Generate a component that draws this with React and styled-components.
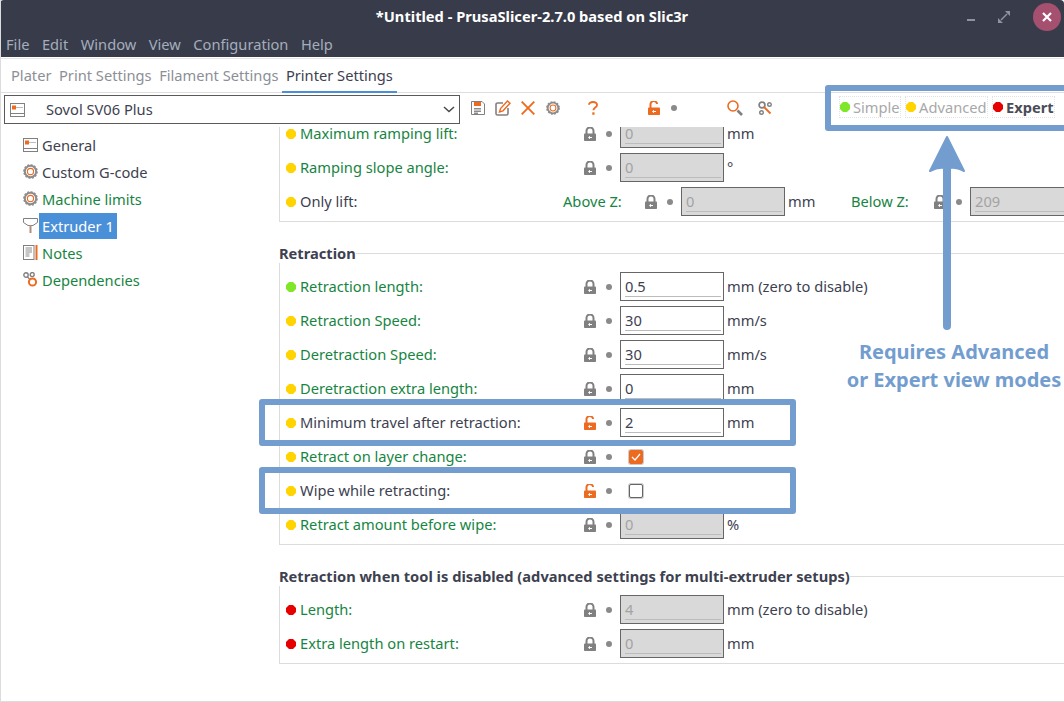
import styled, { createGlobalStyle } from "styled-components";

const GlobalStyle = createGlobalStyle`
    html, body {
        margin: 0;
        padding: 0;
        background: #fff;
    }
    * {
        box-sizing: border-box;
    }
`;

const ORANGE = "#ed6b21";
const GREY = "#808080";
const BLUE = "#739dcf";
const GREEN_TEXT = "#17853f";
const DARK_TEXT = "#3d4150";

const LEVELS = { simple: "#7fe628", advanced: "#ffd400", expert: "#e60000" };

const LockIcon = ({ open }) => (
    <svg width="12" height="14" viewBox="0 0 12 14">
        <path
            d={open ? "M2.5 7V3.8a3 3 0 0 1 6.6-.8" : "M2.5 7V4a3.5 3.5 0 0 1 7 0v3"}
            fill="none"
            stroke={open ? ORANGE : GREY}
            strokeWidth="2"
        />
        <rect x="0" y="6.5" width="12" height="7.5" rx="0.8" fill={open ? ORANGE : GREY} />
        <path d="M8 10.5H4.6M6 9.2l-1.4 1.3L6 11.8" fill="none" stroke="#fff" strokeWidth="1" />
    </svg>
);

const WindowIcon = () => (
    <svg width="15" height="14" viewBox="0 0 15 14">
        <rect x="0.5" y="0.5" width="14" height="13" fill="#fff" stroke={GREY} />
        <path d="M1 10.5h13" stroke={GREY} />
        <rect x="2" y="2.5" width="4" height="4" fill={ORANGE} />
        <path d="M6 4.500h7" stroke="#bdbdbd" />
    </svg>
);

const GearIcon = ({ size = 15 }) => (
    <svg width={size} height={size} viewBox="0 0 15 15">
        <circle cx="7.5" cy="7.5" r="5.7" fill="none" stroke="#8c8c8c" strokeWidth="2" />
        <circle cx="7.5" cy="7.5" r="6.7" fill="none" stroke="#8c8c8c" strokeWidth="1.3" strokeDasharray="2 1.5" />
        <circle cx="7.5" cy="7.5" r="3.1" fill="#fff" stroke={ORANGE} strokeWidth="1.1" />
    </svg>
);

const FunnelIcon = () => (
    <svg width="15" height="15" viewBox="0 0 15 15">
        <path d="M.5.5h14v4L10 7.500H5L.5 4.500z" fill="#fff" stroke={GREY} />
        <rect x="6.500" y="7" width="2" height="8" fill="#b08f80" />
    </svg>
);

const NotesIcon = () => (
    <svg width="15" height="15" viewBox="0 0 15 15">
        <rect x="0.5" y="0.5" width="10.500" height="14" fill="#fff" stroke={GREY} />
        <path d="M2.500 3h6.500M2.500 5h6.500M2.500 7h6.500M2.500 9h4M2.500 11h4" stroke="#8c8c8c" />
        <rect x="12.500" y="0" width="2" height="15" fill={ORANGE} />
    </svg>
);

const DepsIcon = () => (
    <svg width="15" height="15" viewBox="0 0 15 15">
        <circle cx="3" cy="3" r="2.200" fill="none" stroke={GREY} strokeWidth="1.400" />
        <circle cx="9.200" cy="2.600" r="2" fill="none" stroke={GREY} strokeWidth="1.400" />
        <path d="M4.500 5l2 2" stroke={GREY} strokeWidth="1.200" />
        <circle cx="9.500" cy="10" r="3.600" fill="none" stroke={ORANGE} strokeWidth="2" />
    </svg>
);

const SaveIcon = () => (
    <svg width="14" height="14" viewBox="0 0 14 14">
        <path d="M.5.5h10.500l2.500 2.500v10.500H.5z" fill="#fff" stroke={GREY} />
        <path d="M3 1h7v4H3z" fill={ORANGE} />
        <path d="M3 7h7v1.500H3zM3 9.500h7V11H3zM3 11.500h4V13H3z" fill="#8c8c8c" />
    </svg>
);

const EditIcon = () => (
    <svg width="16" height="16" viewBox="0 0 16 16">
        <path d="M13 8v5.500A1.500 1.500 0 0 1 11.500 15h-9A1.500 1.500 0 0 1 1 13.500v-9A1.500 1.500 0 0 1 2.500 3H8" fill="none" stroke={GREY} strokeWidth="1.600" />
        <path d="M4.500 12l1-3.500 7-7.500 2.500 2.300-7 7.500z" fill="#fff" stroke={ORANGE} strokeWidth="1.400" />
    </svg>
);

const CrossIcon = () => (
    <svg width="14" height="14" viewBox="0 0 14 14">
        <path d="M.7.7l12.600 12.600M13.300.7L.7 13.300" stroke={ORANGE} strokeWidth="1.900" />
    </svg>
);

const QuestionIcon = () => (
    <svg width="10" height="14" viewBox="0 0 10 14">
        <path d="M1 3.800C1 2 2.600 1 5 1s4 1.100 4 2.900c0 2.700-3.600 2.500-3.600 5.400" fill="none" stroke={ORANGE} strokeWidth="1.900" />
        <rect x="4.300" y="11.300" width="2.200" height="2.500" fill={ORANGE} />
    </svg>
);

const SearchIcon = () => (
    <svg width="16" height="16" viewBox="0 0 16 16">
        <path d="M10.500 10.500l4.500 4.500" stroke={GREY} strokeWidth="2.600" />
        <circle cx="6" cy="6" r="5" fill="#fff" stroke={ORANGE} strokeWidth="1.600" />
    </svg>
);

const ToolsIcon = () => (
    <svg width="14" height="14" viewBox="0 0 14 14">
        <circle cx="4" cy="4" r="2.900" fill="none" stroke={GREY} strokeWidth="1.700" />
        <circle cx="11.500" cy="3.500" r="1.800" fill="none" stroke={GREY} strokeWidth="1.400" />
        <circle cx="3.500" cy="11.500" r="1.800" fill="none" stroke={GREY} strokeWidth="1.400" />
        <path d="M6 6l6.500 6.500" stroke={ORANGE} strokeWidth="1.800" />
    </svg>
);

const Chevron = () => (
    <svg width="12" height="7" viewBox="0 0 12 7">
        <path d="M1 1l5 4.500L11 1" fill="none" stroke="#4a4a4a" strokeWidth="1.500" />
    </svg>
);

const Bullet = ({ level }) => (
    <SBullet width="10" height="10" viewBox="0 0 10 10">
        <path d="M3 0h4l3 3v4l-3 3H3L0 7V3z" fill={LEVELS[level]} />
    </SBullet>
);

const Field = ({ value, disabled }) => (
    <SField $disabled={disabled}>
        <SFieldValue>{value}</SFieldValue>
    </SField>
);

const Controls = ({ open, children }) => (
    <>
        <SLock>
            <LockIcon open={open} />
        </SLock>
        <SDot />
        {children}
    </>
);

const SettingRow = ({ level, label, green, open, value, disabled, unit, check }) => (
    <SRow>
        <Bullet level={level} />
        <SLabel $green={green}>{label}</SLabel>
        <Controls open={open}>
            {check === undefined ? (
                <Field value={value} disabled={disabled} />
            ) : (
                <SCheckSlot>
                    <SCheck $checked={check}>
                        {check && (
                            <svg width="10" height="8" viewBox="0 0 10 8">
                                <path d="M1 4l3 3 5-6" fill="none" stroke="#fff" strokeWidth="1.200" />
                            </svg>
                        )}
                    </SCheck>
                </SCheckSlot>
            )}
        </Controls>
        {unit && <SUnit>{unit}</SUnit>}
    </SRow>
);

const retraction = [
    { level: "simple", label: "Retraction length:", green: true, value: "0.5", unit: "mm (zero to disable)" },
    { level: "advanced", label: "Retraction Speed:", green: true, value: "30", unit: "mm/s" },
    { level: "advanced", label: "Deretraction Speed:", green: true, value: "30", unit: "mm/s" },
    { level: "advanced", label: "Deretraction extra length:", green: true, value: "0", unit: "mm" },
    { level: "advanced", label: "Minimum travel after retraction:", open: true, value: "2", unit: "mm" },
    { level: "advanced", label: "Retract on layer change:", green: true, check: true },
    { level: "advanced", label: "Wipe while retracting:", open: true, check: false },
    { level: "advanced", label: "Retract amount before wipe:", green: true, value: "0", disabled: true, unit: "%" },
];

const sideItems = [
    { icon: <WindowIcon />, label: "General" },
    { icon: <GearIcon />, label: "Custom G-code" },
    { icon: <GearIcon />, label: "Machine limits", green: true },
    { icon: <FunnelIcon />, label: "Extruder 1", active: true },
    { icon: <NotesIcon />, label: "Notes", green: true },
    { icon: <DepsIcon />, label: "Dependencies", green: true },
];

export default function App() {
    return (
        <SWindow>
            <GlobalStyle />
            <SHeader>
                <STitleBar>
                    <span />
                    <STitle>*Untitled - PrusaSlicer-2.7.0 based on Slic3r</STitle>
                    <SWindowButtons>
                        <SMinimize />
                        <svg width="12" height="12" viewBox="0 0 12 12">
                            <path d="M7 0h5v5zM0 12V7l5 5z" fill="#8d93a3" />
                            <path d="M3 9l6-6" stroke="#8d93a3" strokeWidth="1.500" />
                        </svg>
                        <SClose>
                            <svg width="10" height="10" viewBox="0 0 10 10">
                                <path d="M1 1l8 8M9 1L1 9" stroke="#fff" strokeWidth="2.200" />
                            </svg>
                        </SClose>
                    </SWindowButtons>
                </STitleBar>
                <SMenuBar>
                    {["File", "Edit", "Window", "View", "Configuration", "Help"].map((m) => (
                        <SMenuItem key={m}>{m}</SMenuItem>
                    ))}
                </SMenuBar>
            </SHeader>

            <STabBar>
                <STab>Plater</STab>
                <STab>Print Settings</STab>
                <STab>Filament Settings</STab>
                <STab $active>Printer Settings</STab>
            </STabBar>

            <SToolbar>
                <SCombo>
                    <WindowIcon />
                    <SComboText>Sovol SV06 Plus</SComboText>
                    <Chevron />
                </SCombo>
                <SToolIcons>
                    <SaveIcon />
                    <EditIcon />
                    <CrossIcon />
                    <SToolGear>
                        <GearIcon size={14} />
                    </SToolGear>
                    <SQuestion>
                        <QuestionIcon />
                    </SQuestion>
                    <SToolLock>
                        <LockIcon open />
                        <SToolDot />
                    </SToolLock>
                    <SSearch>
                        <SearchIcon />
                    </SSearch>
                    <SToolsWrap>
                        <ToolsIcon />
                    </SToolsWrap>
                </SToolIcons>
                <SModes>
                    <SMode>
                        <Bullet level="simple" />
                        <SModeText>Simple</SModeText>
                    </SMode>
                    <SMode>
                        <Bullet level="advanced" />
                        <SModeText>Advanced</SModeText>
                    </SMode>
                    <SMode>
                        <Bullet level="expert" />
                        <SModeText $active>Expert</SModeText>
                    </SMode>
                </SModes>
            </SToolbar>

            <SBody>
                <SSidebar>
                    {sideItems.map((item) => (
                        <SSideItem key={item.label}>
                            <SSideIcon>{item.icon}</SSideIcon>
                            <SSideLabel $green={item.green} $active={item.active}>
                                {item.label}
                            </SSideLabel>
                        </SSideItem>
                    ))}
                </SSidebar>

                <SSettings>
                    <SFirstGroup>
                        <SettingRow level="advanced" label="Maximum ramping lift:" green value="0" disabled unit="mm" />
                        <SettingRow level="advanced" label="Ramping slope angle:" green value="0" disabled unit="°" />
                        <SRow>
                            <Bullet level="advanced" />
                            <SLiftLabel>Only lift:</SLiftLabel>
                            <SSubLabel $width={82}>Above Z:</SSubLabel>
                            <Controls>
                                <Field value="0" disabled />
                            </Controls>
                            <SLiftUnit>mm</SLiftUnit>
                            <SSubLabel $width={83}>Below Z:</SSubLabel>
                            <Controls>
                                <Field value="209" disabled />
                            </Controls>
                        </SRow>
                    </SFirstGroup>

                    <SGroup>
                        <SLegend>Retraction</SLegend>
                        {retraction.map((row) => (
                            <SettingRow key={row.label} {...row} />
                        ))}
                    </SGroup>

                    <SGroup>
                        <SLegend>Retraction when tool is disabled (advanced settings for multi-extruder setups)</SLegend>
                        <SettingRow level="expert" label="Length:" green value="4" disabled unit="mm (zero to disable)" />
                        <SettingRow level="expert" label="Extra length on restart:" green value="0" disabled unit="mm" />
                    </SGroup>
                </SSettings>
            </SBody>

            <SHighlight $top={399} $left={259} $width={537} $height={47} />
            <SHighlight $top={467} $left={259} $width={537} $height={47} />
            <SHighlight $top={85} $left={825} $width={245} $height={46} />
            <SArrow width="40" height="198" viewBox="0 0 40 198">
                <path d="M20 3L37 37Q29 33 23 34L23 192a3 3 0 0 1-6 0L17 34Q11 33 3 37z" fill={BLUE} stroke={BLUE} strokeWidth="2" strokeLinejoin="round" />
            </SArrow>
            <SCallout>
                Requires Advanced
                <br />
                or Expert view modes
            </SCallout>
        </SWindow>
    );
}

const SWindow = styled.div`
    position: relative;
    width: 1064px;
    height: 702px;
    overflow: hidden;
    display: flex;
    flex-direction: column;
    background: #fff;
    border-left: 1px solid #dcdcdc;
    border-bottom: 1px solid #dcdcdc;
    font-family: "Noto Sans", sans-serif;
    font-size: 14.67px;
    color: ${DARK_TEXT};
`;

const SHeader = styled.header`
    margin-left: -1px;
    height: 57px;
    flex: none;
    display: flex;
    flex-direction: column;
    background: #383c4a;
    border-radius: 4px 4px 0 0;
`;

const STitleBar = styled.div`
    height: 31px;
    display: grid;
    grid-template-columns: 1fr auto 1fr;
    align-items: center;
`;

const STitle = styled.div`
    color: #fff;
    font-weight: 700;
`;

const SWindowButtons = styled.div`
    display: flex;
    align-items: center;
    justify-content: flex-end;
    padding-right: 3px;
    margin-top: 3px;
    gap: 23px;
`;

const SMinimize = styled.span`
    width: 8px;
    height: 2px;
    margin-top: 6px;
    background: #8d93a3;
`;

const SClose = styled.span`
    width: 28px;
    height: 28px;
    border-radius: 50%;
    background: #a5506f;
    display: flex;
    align-items: center;
    justify-content: center;
`;

const SMenuBar = styled.nav`
    display: flex;
    height: 25px;
    margin-left: -0.25px;
    align-items: center;
`;

const SMenuItem = styled.span`
    padding: 0 6.25px;
    color: #a4aebd;
`;

const STabBar = styled.div`
    flex: none;
    height: 35px;
    margin-top: 1px;
    padding-left: 6.25px;
    display: flex;
    border-top: 1px solid #e6e6e6;
    border-bottom: 1px solid #dedede;
`;

const STab = styled.div`
    padding: 0 3.75px;
    margin-bottom: -1px;
    display: flex;
    align-items: center;
    color: ${(props) => (props.$active ? DARK_TEXT : "#8c8f96")};
    border-bottom: 2px solid ${(props) => (props.$active ? "#4a90d9" : "transparent")};
`;

const SToolbar = styled.div`
    flex: none;
    height: 34px;
    padding: 2px 0 0 3px;
    display: flex;
    align-items: flex-start;
`;

const SCombo = styled.div`
    width: 456px;
    height: 29px;
    padding: 0 4px 0 5px;
    display: flex;
    align-items: center;
    border: 1px solid #5a5a5a;
`;

const SComboText = styled.span`
    flex: 1;
    margin-left: 21px;
    padding-bottom: 2px;
`;

const SToolIcons = styled.div`
    width: 313px;
    height: 26px;
    padding-left: 11px;
    display: flex;
    align-items: center;
    gap: 10px;
`;

const SToolGear = styled.span`
    display: flex;
    margin-left: 1px;
`;

const SQuestion = styled.span`
    display: flex;
    margin-left: 18px;
`;

const SToolLock = styled.span`
    display: flex;
    align-items: center;
    margin-left: 40px;
`;

const SSearch = styled.span`
    display: flex;
    margin-left: 40px;
`;

const SToolsWrap = styled.span`
    display: flex;
    margin-left: 5px;
`;

const SModes = styled.div`
    display: flex;
    height: 20px;
    margin-top: 2px;
    margin-left: 67px;
    gap: 6.5px;
`;

const SMode = styled.div`
    display: flex;
    align-items: center;
    gap: 3px;
    outline: 1px dotted #e2e2e2;

    svg {
        margin-top: 0;
    }
`;

const SModeText = styled.span`
    color: ${(props) => (props.$active ? "#4a4d58" : "#a8a8a8")};
    font-weight: ${(props) => (props.$active ? 700 : 400)};
`;

const SBody = styled.div`
    flex: 1;
    min-height: 0;
    display: flex;
    overflow: hidden;
`;

const SSidebar = styled.aside`
    flex: none;
    width: 278px;
    padding: 4px 0 0 22px;
`;

const SSideItem = styled.div`
    height: 27px;
    display: flex;
    align-items: center;
`;

const SSideIcon = styled.span`
    width: 16px;
    display: flex;
`;

const SSideLabel = styled.span`
    height: 26px;
    padding: 0 3px;
    display: flex;
    align-items: center;
    color: ${(props) => (props.$active ? "#fff" : props.$green ? GREEN_TEXT : DARK_TEXT)};
    background: ${(props) => (props.$active ? "#4a90d9" : "transparent")};
`;

const SSettings = styled.main`
    flex: 1;
    min-width: 0;
    margin-top: -11px;
`;

const SFirstGroup = styled.section`
    padding: 0 0 3px 6px;
    border-left: 1px solid #dcdcdc;
    border-bottom: 1px solid #dcdcdc;
`;

const SGroup = styled.fieldset`
    margin: 21px 0 0;
    padding: 6px 0 3px 6px;
    min-width: 0;
    border: 0;
    border-left: 1px solid #dcdcdc;
    border-top: 1px solid #dcdcdc;
    border-bottom: 1px solid #dcdcdc;
`;

const SLegend = styled.legend`
    margin-left: -7px;
    padding: 0;
    font-weight: 700;
    line-height: 20px;
`;

const SRow = styled.div`
    height: 34px;
    display: flex;
    align-items: center;
    white-space: nowrap;
`;

const SBullet = styled.svg`
    flex: none;
    display: block;
    margin-top: 2px;
`;

const SLabel = styled.span`
    width: 284px;
    margin-left: 4px;
    flex: none;
    color: ${(props) => (props.$green ? GREEN_TEXT : DARK_TEXT)};
`;

const SLiftLabel = styled(SLabel)`
    width: 263px;
`;

const SSubLabel = styled.span`
    flex: none;
    width: ${(props) => props.$width}px;
    color: ${GREEN_TEXT};
`;

const SLock = styled.span`
    flex: none;
    display: flex;
    margin-top: 2px;
`;

const SDot = styled.span`
    flex: none;
    width: 6px;
    height: 6px;
    margin: 2px 8px 0 10px;
    border-radius: 50%;
    background: #8a8a8a;
`;

const SToolDot = styled(SDot)`
    margin: 0 0 0 11px;
`;

const SField = styled.div`
    flex: none;
    width: 104px;
    height: 29px;
    padding: 0 2px 3px 4px;
    display: flex;
    border: 1px solid #666;
    background: ${(props) => (props.$disabled ? "#d9d9d9" : "#fff")};
    color: ${(props) => (props.$disabled ? "#a3a3a3" : DARK_TEXT)};
`;

const SFieldValue = styled.div`
    flex: 1;
    padding-top: 3px;
    line-height: 20px;
    border-bottom: 1px solid #bcbcbc;
`;

const SCheckSlot = styled.div`
    flex: none;
    width: 104px;
    padding-left: 9px;
    padding-top: 2px;
`;

const SCheck = styled.div`
    width: 14px;
    height: 14px;
    display: flex;
    align-items: center;
    justify-content: center;
    border-radius: 2px;
    border: 1px solid ${(props) => (props.$checked ? ORANGE : "#666")};
    background: ${(props) => (props.$checked ? ORANGE : "#fff")};
    box-shadow: 0 0 0 1px #ccc;
`;

const SUnit = styled.span`
    margin-left: 3px;
`;

const SLiftUnit = styled(SUnit)`
    width: 63px;
    flex: none;
`;

const SHighlight = styled.div`
    position: absolute;
    top: ${(props) => props.$top}px;
    left: ${(props) => props.$left - 1}px;
    width: ${(props) => props.$width}px;
    height: ${(props) => props.$height}px;
    border: 6px solid ${BLUE};
    border-radius: 3px;
`;

const SArrow = styled.svg`
    position: absolute;
    top: 134px;
    left: 926px;
`;

const SCallout = styled.div`
    position: absolute;
    top: 338px;
    left: 844px;
    width: 218px;
    text-align: center;
    color: ${BLUE};
    font-size: 20px;
    font-weight: 700;
    line-height: 28px;
    white-space: nowrap;
`;
